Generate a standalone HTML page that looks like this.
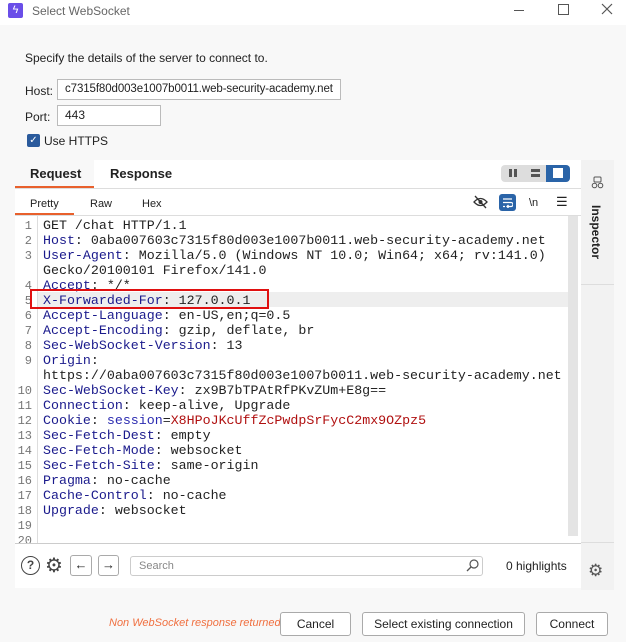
<!DOCTYPE html>
<html><head><style>
*{margin:0;padding:0;box-sizing:border-box}
body{width:626px;height:642px;background:#f8f8f8;font-family:"Liberation Sans",sans-serif;font-size:12px;color:#222;position:relative;overflow:hidden}
.a{position:absolute}
.code{font-family:"Liberation Mono",monospace;font-size:13.3px;line-height:15px;white-space:pre;color:#222}
.k{color:#1a1a8c}.r{color:#b01010}.s{color:#2a2ab0}
.ln{font-family:"Liberation Mono",monospace;font-size:12px;line-height:15px;color:#777;text-align:right;width:28px;white-space:pre}
.btn{position:absolute;top:612px;height:24px;border:1px solid #aaa;border-radius:3px;background:#fff;font-size:12px;text-align:center;line-height:22px}
</style></head><body>
<div class="a" style="left:0;top:0;width:626px;height:25px;background:#fff"></div>
<div class="a" style="left:8px;top:3px;width:15px;height:15px;background:#6a4ee8;border-radius:2px;color:#fff;font-size:11px;text-align:center;line-height:15px">ϟ</div>
<div class="a" style="left:32px;top:4px;font-size:12px;color:#666">Select WebSocket</div>
<div class="a" style="left:514px;top:10px;width:10px;height:1px;background:#555"></div>
<div class="a" style="left:558px;top:4px;width:11px;height:11px;border:1px solid #555"></div>
<svg class="a" style="left:601px;top:3px" width="12" height="12"><path d="M1 1L11 11M11 1L1 11" stroke="#555" stroke-width="1.2"/></svg>

<div class="a" style="left:25px;top:51px;font-size:12px">Specify the details of the server to connect to.</div>
<div class="a" style="left:25px;top:84px">Host:</div>
<div class="a" style="left:57px;top:79px;width:284px;height:21px;background:#fff;border:1px solid #bbb;padding-left:7px;line-height:19px;white-space:nowrap;overflow:hidden;font-size:11.5px;letter-spacing:-0.1px">c7315f80d003e1007b0011.web-security-academy.net</div>
<div class="a" style="left:25px;top:110px">Port:</div>
<div class="a" style="left:57px;top:105px;width:104px;height:21px;background:#fff;border:1px solid #bbb;padding-left:7px;line-height:19px">443</div>
<div class="a" style="left:27px;top:134px;width:13px;height:13px;background:#2a5a9c;border-radius:2px;color:#fff;font-size:10px;text-align:center;line-height:13px">✓</div>
<div class="a" style="left:44px;top:134px">Use HTTPS</div>

<div class="a" style="left:15px;top:160px;width:566px;height:428px;background:#fff"></div>
<div class="a" style="left:15px;top:160px;width:79px;height:28px;background:#f8f8f8"></div>
<div class="a" style="left:30px;top:166px;font-size:13px;font-weight:bold">Request</div>
<div class="a" style="left:110px;top:166px;font-size:13px;font-weight:bold">Response</div>
<div class="a" style="left:15px;top:186px;width:79px;height:2px;background:#e8602c"></div>
<div class="a" style="left:15px;top:188px;width:566px;height:1px;background:#ddd"></div>
<div class="a" style="left:501px;top:165px;width:69px;height:17px;background:#ddd;border-radius:4px"></div>
<div class="a" style="left:546px;top:165px;width:24px;height:17px;background:#2a64a8;border-radius:0 4px 4px 0"></div>
<div class="a" style="left:553px;top:168px;width:10px;height:10px;background:#fff"></div>
<div class="a" style="left:509px;top:169px;width:3px;height:8px;background:#555"></div><div class="a" style="left:514px;top:169px;width:3px;height:8px;background:#555"></div>
<div class="a" style="left:531px;top:169px;width:9px;height:3px;background:#555"></div><div class="a" style="left:531px;top:174px;width:9px;height:3px;background:#555"></div>

<div class="a" style="left:30px;top:198px;font-size:11px">Pretty</div>
<div class="a" style="left:90px;top:198px;font-size:11px">Raw</div>
<div class="a" style="left:142px;top:198px;font-size:11px">Hex</div>
<div class="a" style="left:15px;top:213px;width:59px;height:2px;background:#e8602c"></div>
<div class="a" style="left:15px;top:215px;width:566px;height:1px;background:#ddd"></div>
<svg class="a" style="left:473px;top:195px" width="15" height="14"><path d="M1 7Q7.5 0 14 7Q7.5 14 1 7Z" fill="none" stroke="#333" stroke-width="1.3"/><circle cx="7.5" cy="7" r="2" fill="#333"/><path d="M2 1L13 13" stroke="#333" stroke-width="1.3"/></svg>
<div class="a" style="left:499px;top:194px;width:17px;height:17px;background:#2a64a8;border-radius:3px"></div>
<svg class="a" style="left:502px;top:197px" width="11" height="11"><path d="M1 2H10M1 5.5H9A2 2 0 0 1 9 9.5H5M6.5 8L5 9.5L6.5 11M1 9.5H3" fill="none" stroke="#fff" stroke-width="1.3"/></svg>
<div class="a" style="left:529px;top:197px;font-size:11px">\n</div>
<div class="a" style="left:556px;top:194px;font-size:13px">☰</div>

<div class="a" style="left:37px;top:216px;width:1px;height:327px;background:#ddd"></div>
<div class="a" style="left:568px;top:216px;width:10px;height:320px;background:#e4e4e4"></div>
<div class="a" style="left:38px;top:292px;width:530px;height:15px;background:#eee"></div>
<div class="a ln" style="left:4px;top:219px;height:324px;overflow:hidden">1
2
3

4
5
6
7
8
9

10
11
12
13
14
15
16
17
18
19
20</div>
<div class="a code" style="left:43px;top:218px;height:325px;overflow:hidden">GET /chat HTTP/1.1
<span class="k">Host</span>: 0aba007603c7315f80d003e1007b0011.web-security-academy.net
<span class="k">User-Agent</span>: Mozilla/5.0 (Windows NT 10.0; Win64; x64; rv:141.0)
Gecko/20100101 Firefox/141.0
<span class="k">Accept</span>: */*
<span class="k">X-Forwarded-For</span>: 127.0.0.1
<span class="k">Accept-Language</span>: en-US,en;q=0.5
<span class="k">Accept-Encoding</span>: gzip, deflate, br
<span class="k">Sec-WebSocket-Version</span>: 13
<span class="k">Origin</span>:
https://0aba007603c7315f80d003e1007b0011.web-security-academy.net
<span class="k">Sec-WebSocket-Key</span>: zx9B7bTPAtRfPKvZUm+E8g==
<span class="k">Connection</span>: keep-alive, Upgrade
<span class="k">Cookie</span>: <span class="s">session</span>=<span class="r">X8HPoJKcUffZcPwdpSrFycC2mx9OZpz5</span>
<span class="k">Sec-Fetch-Dest</span>: empty
<span class="k">Sec-Fetch-Mode</span>: websocket
<span class="k">Sec-Fetch-Site</span>: same-origin
<span class="k">Pragma</span>: no-cache
<span class="k">Cache-Control</span>: no-cache
<span class="k">Upgrade</span>: websocket

</div>
<div class="a" style="left:30px;top:289px;width:239px;height:20px;border:2px solid #e01010"></div>
<div class="a" style="left:15px;top:543px;width:566px;height:1px;background:#ccc"></div>

<div class="a" style="left:21px;top:556px;width:19px;height:19px;border:1.5px solid #444;border-radius:50%;text-align:center;font-size:12px;line-height:16px;font-weight:bold;color:#444">?</div>
<div class="a" style="left:45px;top:553px;font-size:20px;color:#444">⚙</div>
<div class="a" style="left:70px;top:555px;width:22px;height:21px;border:1px solid #aaa;border-radius:3px;background:#fff;text-align:center;line-height:18px;font-size:13px">←</div>
<div class="a" style="left:98px;top:555px;width:21px;height:21px;border:1px solid #aaa;border-radius:3px;background:#fff;text-align:center;line-height:18px;font-size:13px">→</div>
<div class="a" style="left:130px;top:556px;width:353px;height:20px;border:1px solid #ccc;border-radius:3px;background:#fff;padding-left:8px;line-height:18px;color:#888;font-size:11px">Search</div>
<svg class="a" style="left:466px;top:559px" width="13" height="13"><circle cx="8" cy="5" r="4" fill="none" stroke="#555" stroke-width="1.2"/><path d="M5 8L1 12" stroke="#555" stroke-width="1.3"/></svg>
<div class="a" style="left:506px;top:559px;font-size:12px">0 highlights</div>

<div class="a" style="left:581px;top:160px;width:33px;height:430px;background:#f2f2f2"></div>
<div class="a" style="left:581px;top:284px;width:33px;height:1px;background:#ddd"></div>
<div class="a" style="left:581px;top:542px;width:33px;height:1px;background:#ddd"></div>
<svg class="a" style="left:591px;top:176px" width="13" height="13"><rect x="3" y="1" width="7" height="5" rx="1" fill="none" stroke="#555"/><circle cx="3.5" cy="9.5" r="2.3" fill="none" stroke="#555"/><circle cx="9.5" cy="9.5" r="2.3" fill="none" stroke="#555"/></svg>
<div class="a" style="left:589px;top:205px;font-size:12px;font-weight:bold;writing-mode:vertical-rl">Inspector</div>
<div class="a" style="left:588px;top:561px;font-size:17px;color:#555">⚙</div>

<div class="a" style="left:109px;top:617px;font-size:11px;font-style:italic;color:#f07040">Non WebSocket response returned</div>
<div class="btn" style="left:280px;width:71px">Cancel</div>
<div class="btn" style="left:362px;width:163px">Select existing connection</div>
<div class="btn" style="left:536px;width:72px">Connect</div>
</body></html>
